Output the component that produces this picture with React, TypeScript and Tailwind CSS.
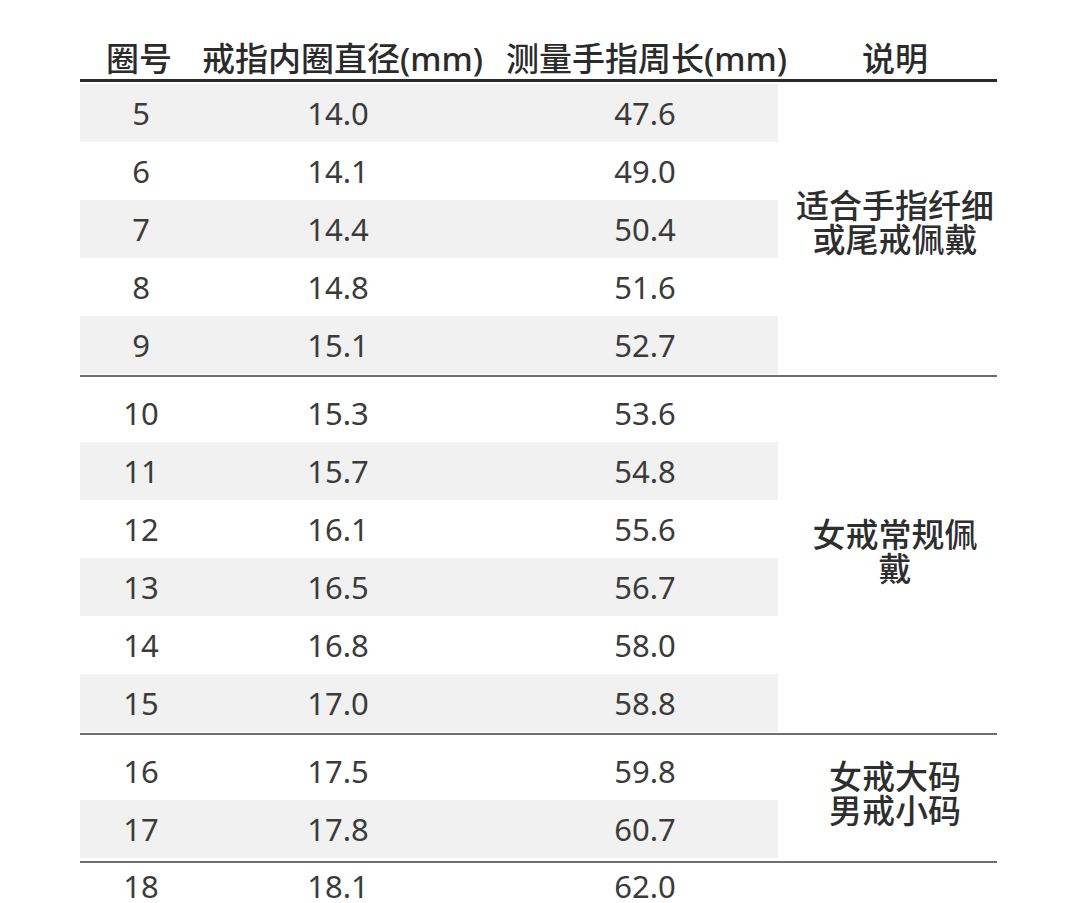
import React from "react";

const FONT = { fontFamily: '"Noto Sans", "Noto Sans CJK SC", sans-serif' };

type Row = [string, string, string];

const groups: { rows: Row[]; desc: React.ReactNode; startGray: boolean }[] = [
  {
    rows: [
      ["5", "14.0", "47.6"],
      ["6", "14.1", "49.0"],
      ["7", "14.4", "50.4"],
      ["8", "14.8", "51.6"],
      ["9", "15.1", "52.7"],
    ],
    desc: (
      <>
        适合手指纤细
        <br />
        或尾戒佩戴
      </>
    ),
    startGray: true,
  },
  {
    rows: [
      ["10", "15.3", "53.6"],
      ["11", "15.7", "54.8"],
      ["12", "16.1", "55.6"],
      ["13", "16.5", "56.7"],
      ["14", "16.8", "58.0"],
      ["15", "17.0", "58.8"],
    ],
    desc: (
      <>
        女戒常规佩
        <br />
        戴
      </>
    ),
    startGray: false,
  },
  {
    rows: [
      ["16", "17.5", "59.8"],
      ["17", "17.8", "60.7"],
    ],
    desc: (
      <>
        女戒大码
        <br />
        男戒小码
      </>
    ),
    startGray: false,
  },
];

function DataRow({ r, gray, h = "h-[58px] items-center" }: { r: Row; gray: boolean; h?: string }) {
  return (
    <div
      className={`grid grid-cols-[122px_272px_304px] ${h} ${
        gray ? "bg-[#f1f1f1]" : "bg-white"
      } text-[31px] text-[#3b3b3b]`}
    >
      <div className="text-center">{r[0]}</div>
      <div className="text-center">{r[1]}</div>
      <div className="text-center pl-[38px]">{r[2]}</div>
    </div>
  );
}

function Group({
  rows,
  desc,
  startGray,
}: {
  rows: Row[];
  desc: React.ReactNode;
  startGray: boolean;
}) {
  return (
    <div className="flex">
      <div className="w-[698px] flex flex-col">
        {rows.map((r, i) => (
          <DataRow key={r[0]} r={r} gray={startGray ? i % 2 === 0 : i % 2 === 1} />
        ))}
      </div>
      <div className="w-[219px] pl-[15px] pb-[12px] flex items-center justify-center text-center text-[33px] leading-[34px] font-medium text-[#2e2e2e]">
        <div>{desc}</div>
      </div>
    </div>
  );
}

export default function App() {
  return (
    <div className="w-[1080px] h-[903px] bg-white overflow-hidden pl-[80px] pt-[34px]" style={FONT}>
      <div className="w-[917px]">
        <div className="grid grid-cols-[122px_272px_304px_219px] items-center h-[48px] border-b-[3px] border-[#2a2a2a] text-[33px] font-medium text-[#2b2b2b] whitespace-nowrap">
          <div className="text-center pr-[4px]">圈号</div>
          <div className="text-center pr-[8px]">戒指内圈直径(mm)</div>
          <div className="text-center pl-[32px]">测量手指周长(mm)</div>
          <div className="text-center pl-[15px]">说明</div>
        </div>
        <div className="mt-[2px]">
          <Group {...groups[0]} />
        </div>
        <div className="mt-[1px] h-[2px] bg-[#6e6e6e]" />
        <div className="mt-[7px]">
          <Group {...groups[1]} />
        </div>
        <div className="mt-[1px] h-[2px] bg-[#6e6e6e]" />
        <div className="mt-[7px]">
          <Group {...groups[2]} />
        </div>
        <div className="mt-[3px] h-[2px] bg-[#6e6e6e]" />
        <div className="w-[698px]">
          <DataRow r={["18", "18.1", "62.0"]} gray={false} h="h-[40px] pt-[7px] leading-[33px]" />
        </div>
      </div>
    </div>
  );
}
